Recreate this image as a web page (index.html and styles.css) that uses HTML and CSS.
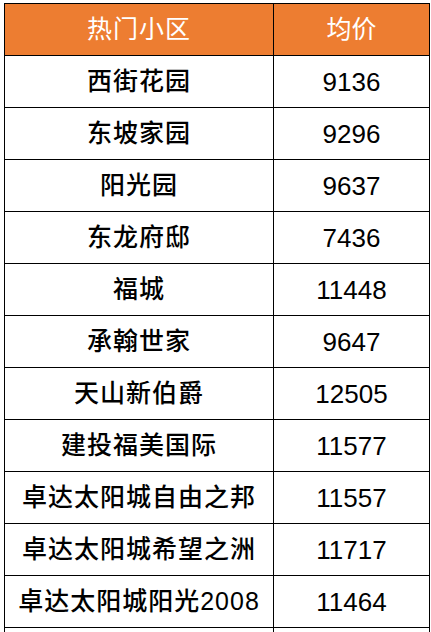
FILE: index.html
```html
<!DOCTYPE html>
<html lang="zh">
<head>
<meta charset="utf-8">
<link rel="stylesheet" href="styles.css">
</head>
<body>
<table class="price-table">
  <thead>
    <tr><th class="name">热门小区</th><th class="price">均价</th></tr>
  </thead>
  <tbody>
    <tr><td class="name">西街花园</td><td class="price">9136</td></tr>
    <tr><td class="name">东坡家园</td><td class="price">9296</td></tr>
    <tr><td class="name">阳光园</td><td class="price">9637</td></tr>
    <tr><td class="name">东龙府邸</td><td class="price">7436</td></tr>
    <tr><td class="name">福城</td><td class="price">11448</td></tr>
    <tr><td class="name">承翰世家</td><td class="price">9647</td></tr>
    <tr><td class="name">天山新伯爵</td><td class="price">12505</td></tr>
    <tr><td class="name">建投福美国际</td><td class="price">11577</td></tr>
    <tr><td class="name">卓达太阳城自由之邦</td><td class="price">11557</td></tr>
    <tr><td class="name">卓达太阳城希望之洲</td><td class="price">11717</td></tr>
    <tr><td class="name">卓达太阳城阳光2008</td><td class="price">11464</td></tr>
    <tr><td class="name">&nbsp;</td><td class="price">&nbsp;</td></tr>
  </tbody>
</table>
</body>
</html>
```
FILE: styles.css
```css
html, body {
  margin: 0;
  padding: 0;
  background: #ffffff;
  overflow: hidden;
}
body {
  padding: 3px 0 0 4px;
  font-family: "Liberation Sans", "Noto Sans CJK SC", sans-serif;
}
.price-table {
  border-collapse: collapse;
  table-layout: fixed;
  width: 424px;
}
.price-table th,
.price-table td {
  border: 1.5px solid #000;
  height: 51px;
  padding: 0;
  text-align: center;
  vertical-align: middle;
  font-size: 25px;
  line-height: 1;
  letter-spacing: 1px;
  color: #000;
}
.price-table th {
  background: #ED7D31;
  color: #ffffff;
  font-weight: normal;
}
.price-table td {
  font-weight: 500;
}
.price-table td.price {
  font-size: 26px;
  font-weight: normal;
}
.price-table .name { width: 268px; }
.price-table .price { width: 155px; letter-spacing: 0; }
```
